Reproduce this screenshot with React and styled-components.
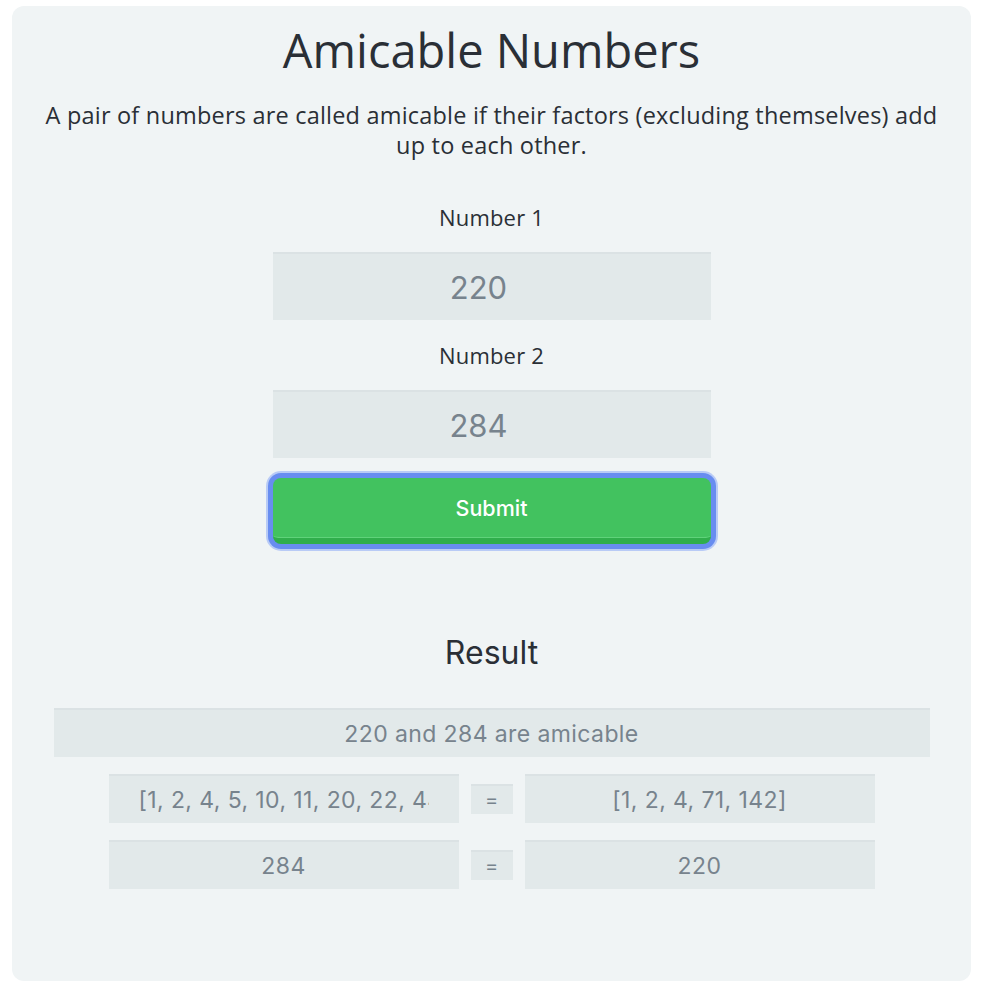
import React from "react";
import styled, { createGlobalStyle } from "styled-components";

const GlobalStyle = createGlobalStyle`
  body {
    margin: 0;
    background: #ffffff;
  }
`;

const Card = styled.div`
  margin: 6px 13px 0 12px;
  height: 975px;
  box-sizing: border-box;
  background: #f0f4f5;
  border-radius: 12px;
  padding-top: 16px;

  display: flex;
  flex-direction: column;
  align-items: center;

  font-family: "Open Sans", "Noto Sans", sans-serif;
  color: #2a2f36;
`;

const Title = styled.h1`
  margin: 0;
  font-size: 47px;
  font-weight: 400;
  line-height: 56px;
`;

const Intro = styled.p`
  margin: 22px 30px 0;
  font-size: 23.5px;
  letter-spacing: 0.2px;
  line-height: 30px;
  text-align: center;
`;

const Form = styled.form`
  margin-top: 42px;
  width: 438px;

  display: flex;
  flex-direction: column;
  align-items: center;
`;

const Label = styled.label`
  font-size: 22px;
  letter-spacing: 0.2px;
  line-height: 30px;
  margin-bottom: 20px;
`;

const Field = styled.input`
  box-sizing: border-box;
  border: none;
  border-top: 2px solid #dbe2e4;
  border-radius: 0;
  background: #e2e9ea;
  text-align: center;
  font-family: "Inter", "Liberation Sans", sans-serif;
  color: #77838d;
  outline: none;
`;

const Input = styled(Field)`
  width: 100%;
  height: 68px;
  padding: 0 26px 0 0;
  font-size: 31px;
  margin-bottom: 20px;
`;

const Button = styled.button`
  width: 100%;
  height: 66px;
  border: none;
  border-bottom: 6px solid #30ae4c;
  border-radius: 8px;
  background: #42c25f;
  color: #ffffff;
  font-family: "Inter", "Liberation Sans", sans-serif;
  font-size: 21.5px;
  font-weight: 500;
  box-shadow: inset 0 -7px 0 -6px #5fd27a, 0 0 0 5px #688df0,
    0 0 0 7px #b9cbf6;
`;

const ResultTitle = styled.h2`
  margin: 89px 0 0;
  font-family: "Inter", "Liberation Sans", sans-serif;
  font-size: 32px;
  font-weight: 400;
  line-height: 40px;
`;

const ResultBox = styled(Field)`
  margin-top: 35px;
  width: 876px;
  height: 49px;
  padding: 0;
  font-size: 23px;
  letter-spacing: 0.4px;
`;

const Equation = styled.div`
  margin-top: 17px;
  display: flex;
  align-items: center;
  gap: 12px;
`;

const Cell = styled(Field)`
  width: 350px;
  height: 49px;
  padding: 0 30px;
  font-size: 23px;
  letter-spacing: 0.4px;
`;

const Equals = styled(Field)`
  width: 42px;
  height: 30px;
  padding: 0;
  font-size: 20px;
`;

const App = () => {
  return (
    <>
      <GlobalStyle />
      <Card>
        <Title>Amicable Numbers</Title>
        <Intro>
          A pair of numbers are called amicable if their factors (excluding
          themselves) add up to each other.
        </Intro>

        <Form onSubmit={(e) => e.preventDefault()}>
          <Label htmlFor="n1">Number 1</Label>
          <Input id="n1" type="text" defaultValue="220" />
          <Label htmlFor="n2">Number 2</Label>
          <Input id="n2" type="text" defaultValue="284" />
          <Button type="submit">Submit</Button>
        </Form>

        <ResultTitle>Result</ResultTitle>
        <ResultBox readOnly value="220 and 284 are amicable" />

        <Equation>
          <Cell readOnly value="[1, 2, 4, 5, 10, 11, 20, 22, 44, 55, 110]" />
          <Equals readOnly value="=" />
          <Cell readOnly value="[1, 2, 4, 71, 142]" />
        </Equation>
        <Equation>
          <Cell readOnly value="284" />
          <Equals readOnly value="=" />
          <Cell readOnly value="220" />
        </Equation>
      </Card>
    </>
  );
};

export default App;
